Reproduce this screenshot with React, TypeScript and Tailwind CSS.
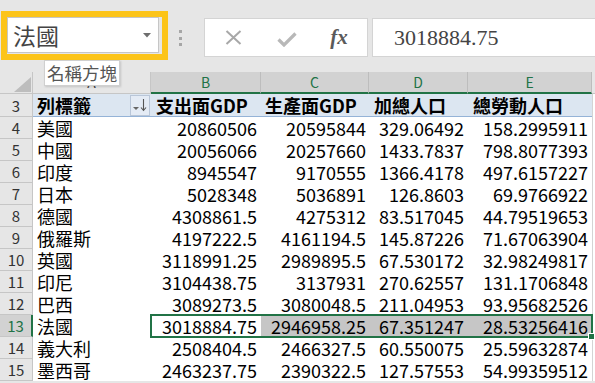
import React from "react"

interface DataRow {
  n: number
  name: string
  b: string
  c: string
  d: string
  e: string
}

const rows: DataRow[] = [
  { n: 4, name: "美國", b: "20860506", c: "20595844", d: "329.06492", e: "158.2995911" },
  { n: 5, name: "中國", b: "20056066", c: "20257660", d: "1433.7837", e: "798.8077393" },
  { n: 6, name: "印度", b: "8945547", c: "9170555", d: "1366.4178", e: "497.6157227" },
  { n: 7, name: "日本", b: "5028348", c: "5036891", d: "126.8603", e: "69.9766922" },
  { n: 8, name: "德國", b: "4308861.5", c: "4275312", d: "83.517045", e: "44.79519653" },
  { n: 9, name: "俄羅斯", b: "4197222.5", c: "4161194.5", d: "145.87226", e: "71.67063904" },
  { n: 10, name: "英國", b: "3118991.25", c: "2989895.5", d: "67.530172", e: "32.98249817" },
  { n: 11, name: "印尼", b: "3104438.75", c: "3137931", d: "270.62557", e: "131.1706848" },
  { n: 12, name: "巴西", b: "3089273.5", c: "3080048.5", d: "211.04953", e: "93.95682526" },
  { n: 13, name: "法國", b: "3018884.75", c: "2946958.25", d: "67.351247", e: "28.53256416" },
  { n: 14, name: "義大利", b: "2508404.5", c: "2466327.5", d: "60.550075", e: "25.59632874" },
  { n: 15, name: "墨西哥", b: "2463237.75", c: "2390322.5", d: "127.57553", e: "54.99359512" },
]

const colHeads = [
  { label: "B", w: "w-[110px]" },
  { label: "C", w: "w-[108px]" },
  { label: "D", w: "w-[99px]" },
  { label: "E", w: "w-[124px]" },
]

export default function App() {
  return (
    <div className="relative w-[595px] h-[383px] overflow-hidden bg-[#e6e6e6] font-['Noto_Sans_CJK_TC','Noto_Sans',sans-serif] text-black">
      {/* 名稱方塊 + 資料編輯列 */}
      <div className="flex items-start h-[72px] pl-[1px]">
        <div className="mt-[11px] w-[167px] h-[49px] border-[6px] border-[#fcc419] bg-[#e6e6e6]">
          <div className="flex items-center justify-between h-[36px] w-[152px] bg-white border border-[#c6c6c6] pl-[5px] pr-[7px]">
            <span className="text-[23px] leading-none text-[#444]">法國</span>
            <svg width="8" height="5" viewBox="0 0 8 5">
              <path d="M0 0 L8 0 L4 4.5 Z" fill="#6e6e6e" />
            </svg>
          </div>
        </div>

        <div className="flex flex-col gap-[3.5px] mt-[30px] ml-[11px]">
          <div className="w-[3px] h-[3px] bg-[#a6a6a6]" />
          <div className="w-[3px] h-[3px] bg-[#a6a6a6]" />
          <div className="w-[3px] h-[3px] bg-[#a6a6a6]" />
        </div>

        <div className="mt-[18px] ml-[22px] flex items-center w-[164px] h-[39px] bg-white border border-[#d4d4d4]">
          <div className="w-[54px] flex justify-center pl-[2px]">
            <svg width="17" height="15" viewBox="0 0 17 15">
              <path d="M1.5 1 L15.5 14 M15.5 1 L1.5 14" stroke="#a8a8a8" strokeWidth="2" fill="none" />
            </svg>
          </div>
          <div className="w-[56px] flex justify-center pt-[4px]">
            <svg width="20" height="15" viewBox="0 0 20 15">
              <path d="M1.5 7.5 L7 13 L18.5 1.5" stroke="#b8b8b8" strokeWidth="3.2" fill="none" />
            </svg>
          </div>
          <div className="flex-1 flex justify-center pr-[4px]">
            <span className="font-['Liberation_Serif',serif] italic font-bold text-[21px] leading-none text-[#5a5a5a]">fx</span>
          </div>
        </div>

        <div className="mt-[18px] ml-[4px] flex-1 h-[39px] bg-white border border-[#d4d4d4] border-r-0 flex items-center pl-[21px]">
          <span className="font-['Liberation_Serif',serif] text-[22px] leading-none text-[#444]">3018884.75</span>
        </div>
      </div>

      {/* 欄標題 */}
      <div className="flex h-[22px]">
        <div className="w-[33px] bg-[#e6e6e6] border-r border-b border-[#c6c6c6] flex items-end justify-end pr-[1px] pb-[1px]">
          <svg width="17" height="15" viewBox="0 0 17 15">
            <path d="M17 0 L17 15 L0 15 Z" fill="#bdbdbd" />
          </svg>
        </div>
        <div className="w-[118px] bg-[#e6e6e6] border-r border-b border-[#c6c6c6] flex items-center justify-center text-[14px] text-[#444]">
          A
        </div>
        {colHeads.map((c) => (
          <div
            key={c.label}
            className={`${c.w} bg-[#d2d2d2] border-r border-[#bdbdbd] border-b-2 border-b-[#217346] flex items-center justify-center text-[14px] text-[#217346]`}
          >
            {c.label}
          </div>
        ))}
        <div className="flex-1 bg-[#e6e6e6] border-b border-[#c6c6c6]" />
      </div>

      {/* 第3列：樞紐分析表標題 */}
      <div className="flex h-[23px] text-[18px] leading-none">
        <div className="w-[33px] bg-[#e6e6e6] border-r border-b border-[#c6c6c6] flex items-center justify-center text-[15px] text-[#333]">
          3
        </div>
        <div className="w-[118px] bg-[#dce6f1] border-b border-[#95b3d7] flex items-center justify-between pl-[4px] pr-[1px] font-bold">
          <span>列標籤</span>
          <div className="w-[20px] h-[21px] bg-[#e4ebf5] border border-[#b9c6d8] flex items-end justify-center pb-[3px]">
            <svg width="16" height="14" viewBox="0 0 16 14">
              <path d="M1 9 L7 9 L4 12 Z" fill="#666" />
              <path d="M11.5 1 L11.5 12 M9 9.5 L11.5 12.5 L14 9.5" stroke="#555" strokeWidth="1.1" fill="none" />
            </svg>
          </div>
        </div>
        <div className="w-[110px] bg-[#dce6f1] border-b border-[#95b3d7] flex items-center pl-[5px] font-bold">支出面GDP</div>
        <div className="w-[108px] bg-[#dce6f1] border-b border-[#95b3d7] flex items-center pl-[4px] font-bold">生產面GDP</div>
        <div className="w-[99px] bg-[#dce6f1] border-b border-[#95b3d7] flex items-center pl-[5px] font-bold">加總人口</div>
        <div className="w-[124px] bg-[#dce6f1] border-b border-[#95b3d7] flex items-center pl-[5px] font-bold">總勞動人口</div>
        <div className="flex-1 bg-white border-l border-[#d4d4d4]" />
      </div>

      {/* 資料列 */}
      {rows.map((r) => {
        const sel = r.n === 13
        const cellBg = sel ? "bg-[#c6c6c6]" : "bg-white"
        return (
          <div key={r.n} className="flex h-[22px] text-[18px] leading-none">
            <div
              className={
                sel
                  ? "w-[33px] bg-[#d2d2d2] border-r-2 border-[#217346] border-b border-b-[#c6c6c6] flex items-center justify-center text-[15px] text-[#217346]"
                  : "w-[33px] bg-[#e6e6e6] border-r border-b border-[#c6c6c6] flex items-center justify-center text-[15px] text-[#333]"
              }
            >
              {r.n}
            </div>
            <div className="w-[118px] bg-white flex items-center pl-[4px]">{r.name}</div>
            <div className="w-[110px] bg-white flex items-center justify-end pr-[4px]">{r.b}</div>
            <div className={`w-[108px] ${cellBg} flex items-center justify-end pr-[3px]`}>{r.c}</div>
            <div className={`w-[99px] ${cellBg} flex items-center justify-end pr-[4px]`}>{r.d}</div>
            <div className={`w-[124px] ${cellBg} flex items-center justify-end pr-[4px]`}>{r.e}</div>
            <div className="flex-1 bg-white border-l border-[#d4d4d4]" />
          </div>
        )
      })}

      {/* 名稱方塊提示 */}
      <div className="absolute left-[44px] top-[60px] w-[76px] h-[26px] bg-white border border-[#d0d0d0] shadow-[1px_1px_2px_rgba(0,0,0,0.15)] flex items-center justify-center text-[17.5px] leading-none text-[#555]">
        名稱方塊
      </div>

      {/* 選取範圍 */}
      <div className="absolute left-[150px] top-[314px] w-[443px] h-[24px] border-2 border-[#217346]" />
      <div className="absolute left-[588px] top-[333px] w-[7px] h-[7px] bg-[#217346] border border-white" />
    </div>
  )
}
